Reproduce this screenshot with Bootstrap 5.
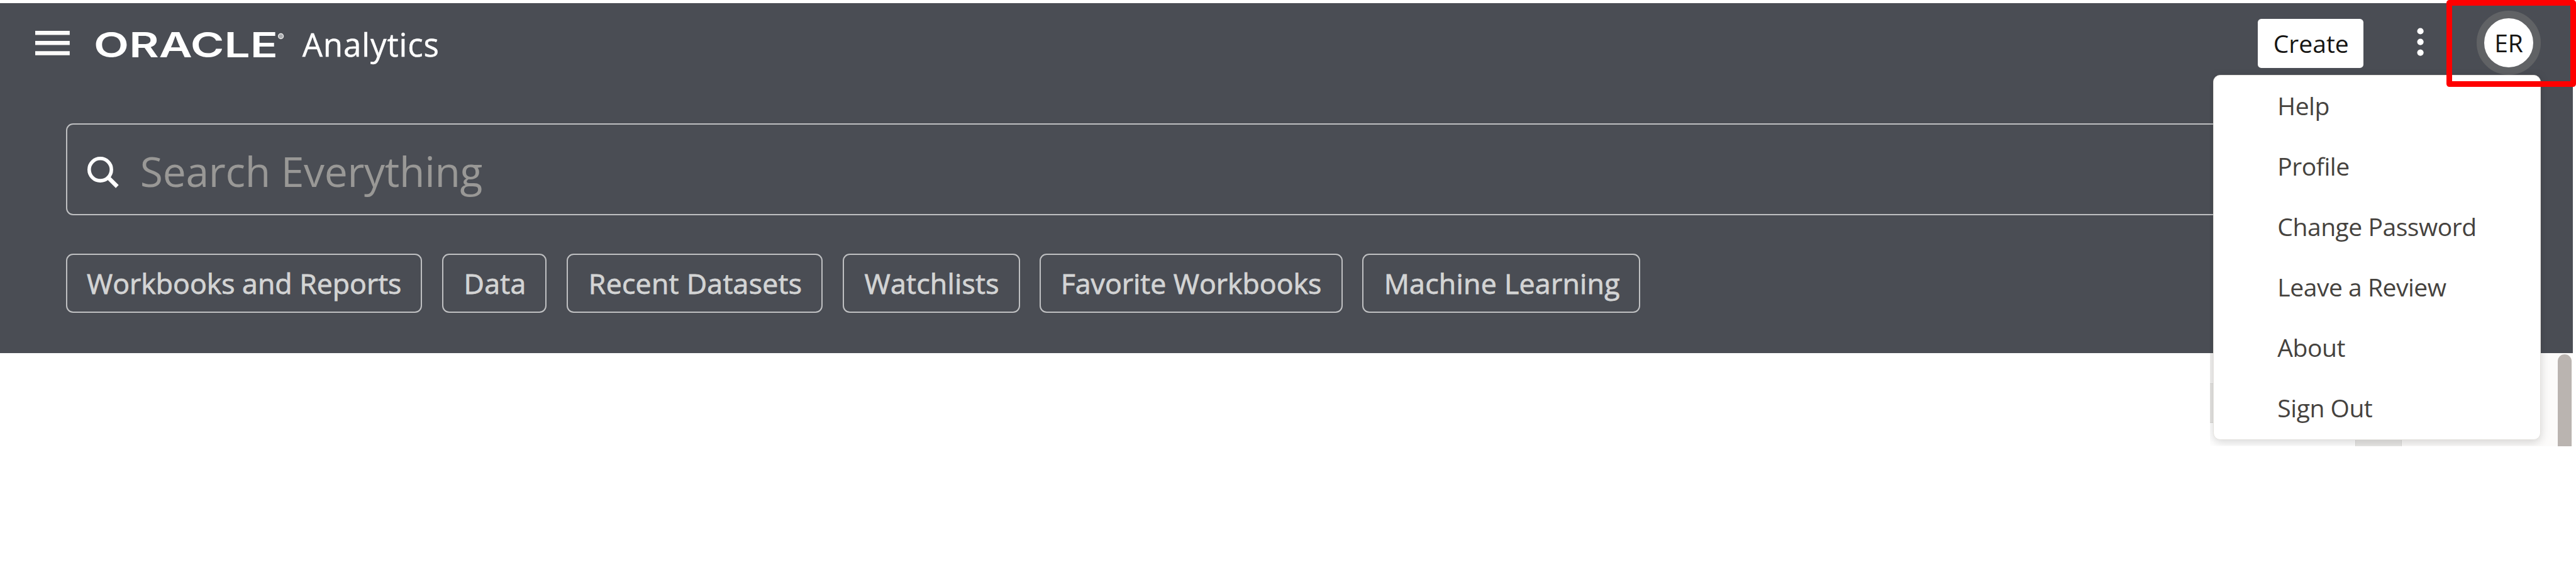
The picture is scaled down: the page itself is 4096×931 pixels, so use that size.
<!DOCTYPE html>
<html lang="en">
<head>
<meta charset="utf-8">
<title>Oracle Analytics</title>
<link href="https://cdn.jsdelivr.net/npm/bootstrap@5.3.0/dist/css/bootstrap.min.css" rel="stylesheet">
<style>
/* 1rem = ten design units */
html{font-size:9.2985px}
body{font-family:"Open Sans","Noto Sans",sans-serif;overflow:hidden;background:#fff;font-size:4.2rem;line-height:1;height:931px;padding-top:.5rem}
.hero{width:440rem;height:59.87rem;background:#4a4d54}
.topbar{height:20.6rem;padding:0 5.5rem 0 6rem}
.topbar>*{flex:none}
.burger{width:5.9rem;height:4.2rem;margin-top:4.8rem}
.logo{width:33rem;height:4.6rem;margin:5rem 0 0 4.2rem;overflow:visible}
.logo text{font-family:Inter,"Liberation Sans",sans-serif;font-size:59px;font-weight:600;fill:#fff}
.product{margin:3.85rem 0 0 2.6rem;color:#fff;font-size:5.5rem;line-height:1.2;white-space:nowrap;letter-spacing:.09rem;-webkit-text-stroke:.05rem #fff}
.btn-create{margin-top:2.7rem;width:18.1rem;height:8.4rem;background:#fff;border-radius:.6rem;font-size:4.2rem;line-height:1;color:#161513;padding:0 0 0 .2rem;border:0}
.kebab{width:1.2rem;height:5rem;margin:4.1rem 9.05rem 0 9.1rem}
.avatar{width:11rem;height:11rem;margin-top:1.3rem;border:1.35rem solid #606265;background:#fff;color:#161513;border-radius:50%}
.searchbox{margin-left:11.3rem;width:420rem;height:15.7rem;border:.3rem solid #bfc0c2;border-radius:1.2rem;padding-left:3.4rem}
.searchbox svg{width:5.4rem;height:5.4rem;margin-top:1.1rem}
.searchbox .hint{margin:.5rem 0 0 3.65rem;color:#999896;font-size:7.1rem;white-space:nowrap;letter-spacing:-.035rem}
.chips{margin:6.5rem 0 0 11.3rem;gap:3.4rem}
.chip{height:10.2rem;border:.3rem solid #bfc0c2;border-radius:1.2rem;color:#d3d4d4;font-size:4.8rem;font-weight:500;padding:0;line-height:1;white-space:nowrap;-webkit-text-stroke:.09rem #d3d4d4}
.chip.wide-set{letter-spacing:.03rem;padding-left:.2rem}
.strip{width:440rem;height:15.83rem}
.pane{width:62.1rem}
.pane-list{width:24.8rem}
.pane-list .head{height:5.1rem;background:#f4f3f2}
.pane-list .item{height:6.8rem;background:#e6e5e3;border:solid #dad9d7;border-width:.2rem 0}
.pane-cell{width:8rem;background:#e9e8e6;border:solid #dddcda;border-width:0 .2rem}
.pane-rest{background:#fcfbfa}
.thumb{width:2.3rem;margin:.2rem .3rem 0 0;border-radius:1.15rem 1.15rem 0 0;background:#bab4b0}
.usermenu{left:378.4rem;top:12.8rem;width:56.1rem;height:62.4rem;border:.2rem solid #e3e1dd;border-radius:1.2rem;background:#fff;padding-left:10.95rem;box-shadow:0 .4rem 1.6rem rgba(0,0,0,.16);clip-path:inset(-1rem -5rem -1rem -.5rem);color:#45423e}
.usermenu a{display:flex;align-items:center;height:10.33rem;color:inherit;text-decoration:none;white-space:nowrap;letter-spacing:-.052rem}
.usermenu a>span{margin-top:-.2rem}
.callout{left:418.3rem;top:0;width:22.2rem;height:14.8rem;border:1rem solid red;border-radius:.5rem}
</style>
</head>
<body class="position-relative">
<header class="hero overflow-hidden">
  <nav class="topbar d-flex align-items-start">
    <svg class="burger" viewBox="0 0 59 42"><path fill="#fcfbfa" d="M0 0h59v7H0zM0 17.300h59v7H0zM0 34.600h59v7H0z"/></svg>
    <svg class="logo" viewBox="0 0 330 46"><text x="-1" y="43.500" textLength="315" lengthAdjust="spacingAndGlyphs">ORACLE</text><circle cx="319" cy="7" r="4.300" fill="#aaacaf" stroke="#e8e8e8" stroke-width="1.500"/></svg>
    <span class="product">Analytics</span>
    <button class="btn btn-create ms-auto">Create</button>
    <svg class="kebab" viewBox="0 0 12 50"><g fill="#fff"><circle cx="6" cy="7" r="5.500"/><circle cx="6" cy="25.300" r="5.500"/><circle cx="6" cy="43.600" r="5.500"/></g></svg>
    <span class="avatar d-flex align-items-center justify-content-center">ER</span>
  </nav>
  <div class="searchbox d-flex align-items-center">
    <svg viewBox="0 0 54 54"><circle cx="22" cy="22" r="19" fill="none" stroke="#fff" stroke-width="6"/><path d="M36 36L51 51" stroke="#fff" stroke-width="7"/></svg>
    <span class="hint">Search Everything</span>
  </div>
  <div class="chips d-flex">
    <button class="btn chip" style="width:60.9rem">Workbooks and Reports</button>
    <button class="btn chip wide-set" style="width:17.9rem">Data</button>
    <button class="btn chip wide-set" style="width:43.8rem">Recent Datasets</button>
    <button class="btn chip wide-set" style="width:30.3rem">Watchlists</button>
    <button class="btn chip" style="width:51.8rem">Favorite Workbooks</button>
    <button class="btn chip wide-set" style="width:47.5rem">Machine Learning</button>
  </div>
</header>
<main class="strip d-flex justify-content-end">
  <div class="pane d-flex">
    <div class="pane-list"><div class="head"></div><div class="item"></div></div>
    <div class="pane-cell"></div>
    <div class="pane-rest flex-fill d-flex justify-content-end"><div class="thumb"></div></div>
  </div>
</main>
<div class="usermenu position-absolute">
  <a href="#"><span>Help</span></a>
  <a href="#"><span>Profile</span></a>
  <a href="#"><span>Change Password</span></a>
  <a href="#"><span>Leave a Review</span></a>
  <a href="#"><span>About</span></a>
  <a href="#"><span>Sign Out</span></a>
</div>
<div class="callout position-absolute"></div>
<script src="https://cdn.jsdelivr.net/npm/bootstrap@5.3.0/dist/js/bootstrap.bundle.min.js"></script>
</body>
</html>
